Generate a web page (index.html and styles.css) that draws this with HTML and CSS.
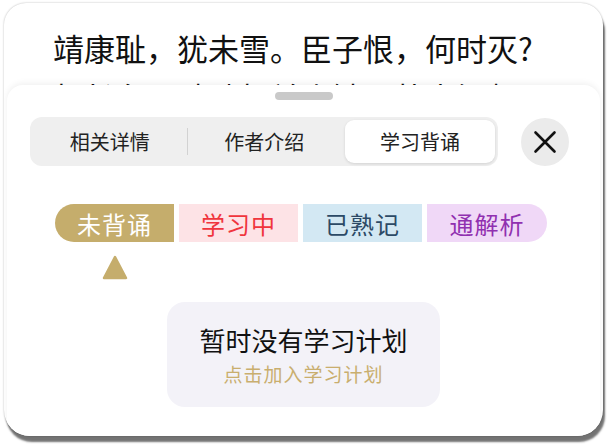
FILE: index.html
```html
<!DOCTYPE html>
<html lang="zh-CN">
<head>
    <meta charset="UTF-8">
    <meta name="viewport" content="width=device-width, initial-scale=1.0">
    <title>学习背诵</title>
    <link rel="stylesheet" href="styles.css">
</head>
<body>
    <div class="frame">
        <div class="poem">
            <p class="poem-line">靖康耻，犹未雪。臣子恨，何时灭?</p>
            <p class="poem-line">驾长车，踏破贺兰山缺。壮志饥餐</p>
        </div>

        <div class="sheet">
            <div class="grabber"></div>

            <div class="top-row">
                <div class="segment">
                    <div class="seg-item">相关详情</div>
                    <div class="seg-divider"></div>
                    <div class="seg-item">作者介绍</div>
                    <div class="seg-item active">学习背诵</div>
                </div>
                <button class="close-btn">
                    <svg width="24" height="24" viewBox="0 0 24 24">
                        <path d="M2.5 2.5 L21.5 21.5 M21.5 2.5 L2.5 21.5" stroke="#111" stroke-width="2.6" stroke-linecap="round" fill="none"/>
                    </svg>
                </button>
            </div>

            <div class="status-row">
                <div class="status status-new">未背诵</div>
                <div class="status status-learning">学习中</div>
                <div class="status status-known">已熟记</div>
                <div class="status status-parse">通解析</div>
            </div>

            <div class="pointer-row">
                <div class="pointer">
                    <svg width="26" height="25" viewBox="0 0 26 25">
                        <polygon points="13,2 24,23 2,23" fill="#c5ad6c" stroke="#c5ad6c" stroke-width="2.5" stroke-linejoin="round"/>
                    </svg>
                </div>
            </div>

            <div class="plan-card">
                <div class="plan-title">暂时没有学习计划</div>
                <div class="plan-link">点击加入学习计划</div>
            </div>
        </div>
    </div>
</body>
</html>
```

FILE: styles.css
```css
body {
    margin: 0;
    padding: 0;
    height: 447px;
    background: #fff;
    font-family: "Noto Sans CJK SC", "Noto Sans", sans-serif;
    color: #111;
}
.frame {
    position: relative;
    margin: 3px 0 0 4px;
    width: 599px;
    height: 433px;
    background: #fff;
    border-radius: 22px 22px 26px 26px;
    overflow: hidden;
    box-shadow: 0 0 2px rgba(0, 0, 0, 0.3), 2px 6px 2px rgba(0, 0, 0, 0.55);
}
.poem {
    padding: 20px 0 0 49px;
}
.poem-line {
    margin: 0;
    font-size: 31px;
    line-height: 49px;
    white-space: nowrap;
    color: #111;
}
.sheet {
    position: absolute;
    left: 3px;
    right: 3px;
    top: 82px;
    bottom: 0;
    background: #fff;
    border-radius: 16px 16px 0 0;
    box-shadow: 0 -2px 6px rgba(0, 0, 0, 0.06);
}
.grabber {
    width: 58px;
    height: 8px;
    margin: 7px auto 0;
    border-radius: 4px;
    background: #c9c9c9;
}
.top-row {
    display: flex;
    align-items: center;
    gap: 23px;
    margin-top: 17px;
    padding-left: 23px;
}
.segment {
    display: flex;
    align-items: center;
    width: 468px;
    height: 49px;
    padding: 3px;
    box-sizing: border-box;
    background: #efefef;
    border-radius: 12px;
}
.seg-item {
    flex: 1;
    height: 100%;
    display: flex;
    align-items: center;
    justify-content: center;
    font-size: 20px;
    color: #222;
    border-radius: 9px;
}
.seg-item.active {
    flex: 0 0 150px;
    margin-left: 4px;
    background: #fff;
    box-shadow: 0 1px 3px rgba(0, 0, 0, 0.12);
}
.seg-divider {
    width: 1px;
    height: 27px;
    background: #d2d2d2;
}
.close-btn {
    width: 48px;
    height: 48px;
    padding: 0;
    border: none;
    border-radius: 50%;
    background: #ebebeb;
    display: flex;
    align-items: center;
    justify-content: center;
}
.status-row {
    display: flex;
    gap: 5px;
    margin-top: 38px;
    padding-left: 48px;
}
.status {
    width: 119px;
    height: 38px;
    display: flex;
    align-items: center;
    justify-content: center;
    font-size: 24px;
    letter-spacing: 1px;
}
.status-new {
    background: #c5ad6c;
    color: #fff;
    border-radius: 19px 0 0 19px;
}
.status-learning {
    background: #fde3e6;
    color: #f0353d;
}
.status-known {
    background: #d3e8f3;
    color: #2c4a66;
}
.status-parse {
    width: 120px;
    background: #f0d8f7;
    color: #9030b0;
    border-radius: 0 19px 19px 0;
}
.pointer-row {
    display: flex;
    padding-left: 48px;
    margin-top: 13px;
}
.pointer {
    width: 119px;
    display: flex;
    justify-content: center;
}
.pointer svg {
    display: block;
}
.plan-card {
    width: 273px;
    height: 105px;
    margin: 22px auto 0;
    background: #f3f2f8;
    border-radius: 18px;
    display: flex;
    flex-direction: column;
    align-items: center;
    justify-content: center;
}
.plan-title {
    font-size: 26px;
    line-height: 34px;
    color: #111;
}
.plan-link {
    font-size: 19px;
    line-height: 26px;
    margin-top: 4px;
    letter-spacing: 1px;
    color: #c9ae6e;
}
```
